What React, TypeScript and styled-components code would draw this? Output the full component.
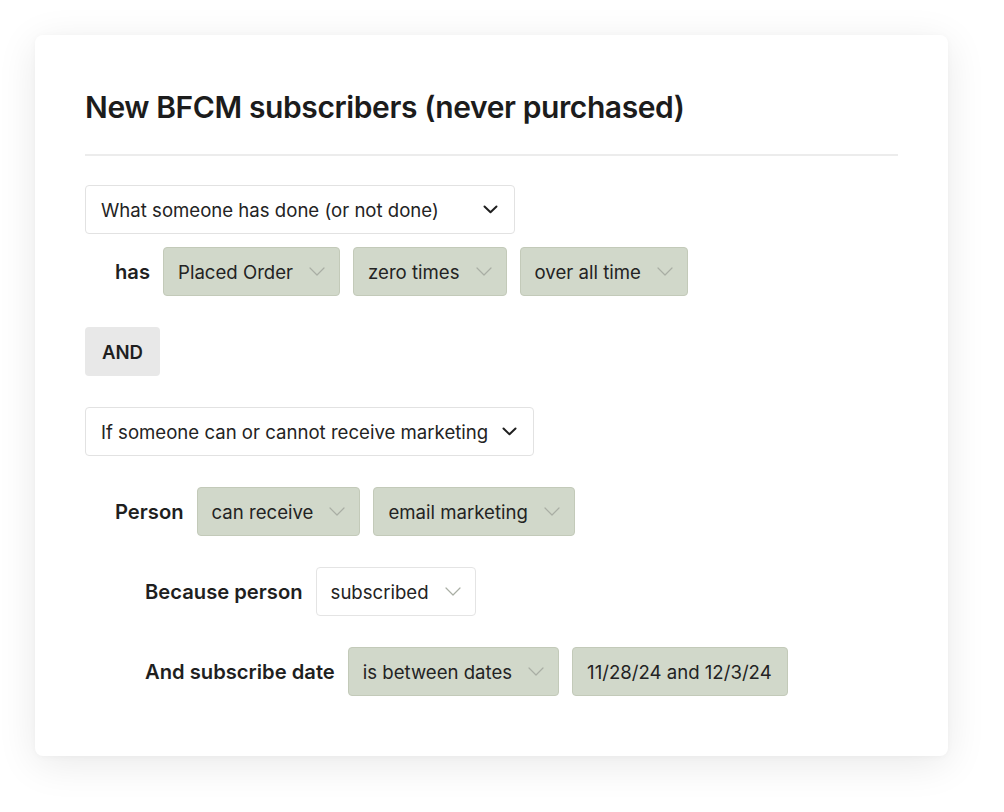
import React from "react";
import styled, { createGlobalStyle } from "styled-components";

const GlobalStyle = createGlobalStyle`
  html, body {
    margin: 0;
    padding: 0;
    background: #ffffff;
  }
  body {
    font-family: Inter, "Liberation Sans", Arial, sans-serif;
    color: #1f1f1f;
    -webkit-font-smoothing: antialiased;
  }
`;

const Page = styled.div`
  padding: 35px;
  width: 1004px;
  height: 812px;
  box-sizing: border-box;
`;

const Card = styled.div`
  width: 913px;
  height: 721px;
  box-sizing: border-box;
  background: #fff;
  border-radius: 8px;
  box-shadow: 0 8px 40px rgba(0, 0, 0, 0.09), 0 1px 6px rgba(0, 0, 0, 0.03);
  padding: 52px 50px 0 50px;
`;

const Title = styled.h1`
  margin: 0;
  font-family: Inter, "Liberation Sans", sans-serif;
  font-size: 30px;
  font-weight: 600;
  letter-spacing: -0.4px;
  line-height: 40px;
  color: #1c1c1c;
`;

const Divider = styled.hr`
  border: none;
  height: 2px;
  background: #ececec;
  margin: 27px 0 29px 0;
`;

const Stack = styled.div`
  display: flex;
  flex-direction: column;
  align-items: flex-start;
`;

const Row = styled.div<{ indent?: number; mt?: number }>`
  display: flex;
  align-items: center;
  gap: 13px;
  padding-left: ${(p) => p.indent || 0}px;
  margin-top: ${(p) => p.mt || 0}px;
`;

const Label = styled.span`
  font-size: 20.2px;
  font-weight: 600;
  color: #1f1f1f;
`;

const Select = styled.div<{ w: number; mt?: number }>`
  display: flex;
  align-items: center;
  justify-content: space-between;
  width: ${(p) => p.w}px;
  height: 49px;
  box-sizing: border-box;
  padding: 0 16px 0 15px;
  border: 1px solid #e2e2e2;
  border-radius: 4px;
  background: #fff;
  font-size: 18.6px;
  color: #232323;
  margin-top: ${(p) => p.mt || 0}px;
`;

const Chip = styled.div<{ plain?: boolean; noIcon?: boolean }>`
  display: flex;
  align-items: center;
  height: 49px;
  box-sizing: border-box;
  padding: 0 ${(p) => (p.noIcon ? 15 : 14)}px 0 14px;
  border: 1px solid ${(p) => (p.plain ? "#e4e4e4" : "#c3cab9")};
  border-radius: 4px;
  background: ${(p) => (p.plain ? "#ffffff" : "#d1d8ca")};
  font-size: 18.6px;
  color: #232323;
  gap: 16px;
`;

const AndButton = styled.div`
  display: flex;
  align-items: center;
  justify-content: center;
  width: 75px;
  height: 49px;
  border-radius: 4px;
  background: #e8e8e8;
  font-size: 18.6px;
  font-weight: 600;
  color: #1f1f1f;
  margin-top: 31px;
`;

const DarkChevron = () => (
  <svg width="15" height="9" viewBox="0 0 15 9" fill="none">
    <path d="M1.5 1.5 L7.5 7.3 L13.5 1.5" stroke="#1f1f1f" strokeWidth="2" strokeLinecap="round" strokeLinejoin="round" />
  </svg>
);

const LightChevron = () => (
  <svg width="16" height="9" viewBox="0 0 16 9" fill="none">
    <path d="M1 1 L8 8 L15 1" stroke="#a9aea4" strokeWidth="1.2" strokeLinecap="round" strokeLinejoin="round" />
  </svg>
);

const Pill = ({ text, plain, noIcon }: { text: string; plain?: boolean; noIcon?: boolean }) => (
  <Chip plain={plain} noIcon={noIcon}>
    <span>{text}</span>
    {!noIcon && <LightChevron />}
  </Chip>
);

export default function App() {
  return (
    <Page>
      <GlobalStyle />
      <Card>
        <Title>New BFCM subscribers (never purchased)</Title>
        <Divider />
        <Stack>
          <Select w={430}>
            <span>What someone has done (or not done)</span>
            <DarkChevron />
          </Select>
          <Row indent={30} mt={13}>
            <Label>has</Label>
            <Pill text="Placed Order" />
            <Pill text="zero times" />
            <Pill text="over all time" />
          </Row>
          <AndButton>AND</AndButton>
          <Select w={449} mt={31}>
            <span>If someone can or cannot receive marketing</span>
            <DarkChevron />
          </Select>
          <Row indent={30} mt={31}>
            <Label>Person</Label>
            <Pill text="can receive" />
            <Pill text="email marketing" />
          </Row>
          <Row indent={60} mt={31}>
            <Label>Because person</Label>
            <Pill text="subscribed" plain />
          </Row>
          <Row indent={60} mt={31}>
            <Label>And subscribe date</Label>
            <Pill text="is between dates" />
            <Pill text="11/28/24 and 12/3/24" noIcon />
          </Row>
        </Stack>
      </Card>
    </Page>
  );
}
